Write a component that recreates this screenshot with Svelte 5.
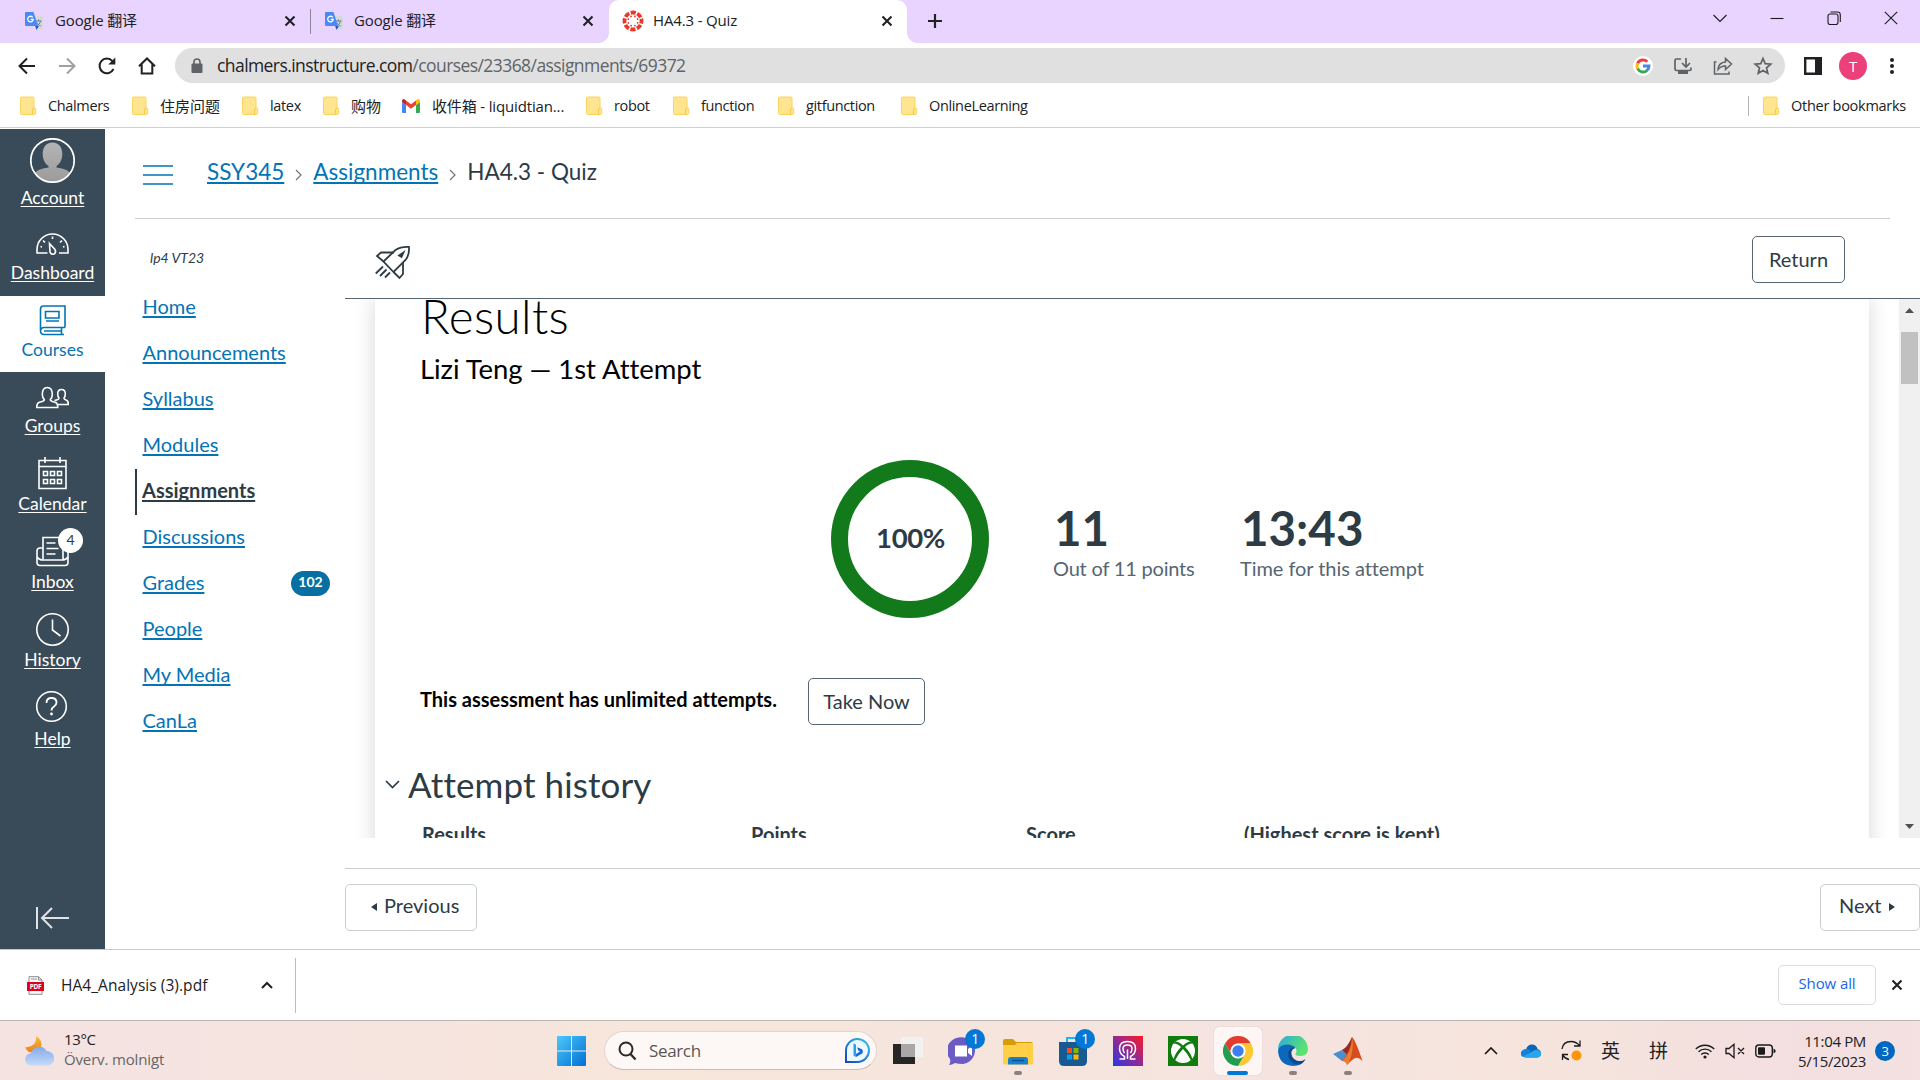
<script>
  const bookmarks = ['Chalmers', '住房问题', 'latex', '购物', '收件箱 - liquidtian...', 'robot', 'function', 'gitfunction', 'OnlineLearning'];
  const globalNav = ['Account', 'Dashboard', 'Courses', 'Groups', 'Calendar', 'Inbox', 'History', 'Help'];
  const courseNav = ['Home', 'Announcements', 'Syllabus', 'Modules', 'Assignments', 'Discussions', 'Grades', 'People', 'My Media', 'CanLa'];
  const apps = ['taskview', 'chat', 'explorer', 'store', 'purple', 'xbox', 'chrome', 'edge', 'matlab'];
  const running = ['explorer', 'edge', 'matlab'];
  const canvasRays = [0, 45, 90, 135, 180, 225, 270, 315];
</script>

{#snippet close()}
  <svg class="x" width="12" height="12" viewBox="0 0 12 12"><path d="M1.5 1.5 10.5 10.5M10.5 1.5 1.5 10.5" stroke="#202124" stroke-width="2.1" /></svg>
{/snippet}

{#snippet translateIcon()}
  <svg width="20" height="20" viewBox="0 0 20 20">
    <path d="M8 5h10a1 1 0 0 1 1 1v11a1 1 0 0 1-1 1h-6z" fill="#d5d9de" />
    <path d="M11.5 10h6M14.5 8.5V10M16.5 10c-.5 2.500-2 4-4 5M12.800 11.500c1 1.800 2.200 2.700 4 3.500" stroke="#6d7a8c" fill="none" />
    <path d="M11 14.500 12.500 19l2.500-4z" fill="#2a56c6" />
    <path d="M2 1h7.500L14 15H2a1 1 0 0 1-1-1V2a1 1 0 0 1 1-1z" fill="#4a89f3" />
    <path d="M8.700 6.300A2.800 2.800 0 1 0 9.300 8.300H6.600" stroke="#fff" stroke-width="1.300" fill="none" />
  </svg>
{/snippet}

{#snippet folder()}
  <svg width="17" height="20" viewBox="0 0 17 20">
    <path d="M1.500 1h11.500q1 0 1 1v10h.500q1.200 0 1.200 1.200V17q0 1.500-1.500 1.500H1.500q-1 0-1-1V2q0-1 1-1z" fill="#ffe590" stroke="#fbd45c" />
    <path d="M12.500 18.300v-4.500q0-1.500 1.500-1.500" fill="none" stroke="#f5c946" />
  </svg>
{/snippet}

<div class="screen">
  <div class="tabs">
    <div class="tab">{@render translateIcon()}<span>Google 翻译</span>{@render close()}</div>
    <div class="tab second">{@render translateIcon()}<span>Google 翻译</span>{@render close()}</div>
    <div class="tab active">
      <svg width="22" height="22" viewBox="0 0 22 22">
        <circle cx="11" cy="11" r="8.500" fill="none" stroke="#e8392b" stroke-width="3.800" stroke-dasharray="5.100 1.576" stroke-dashoffset="2.550" />
        {#each canvasRays as a}<circle cx="11" cy="6" r=".9" fill="#e8392b" transform="rotate({a + 22} 11 11)" />{/each}
      </svg>
      <span>HA4.3 - Quiz</span>{@render close()}
    </div>
    <svg class="plus" width="16" height="16" viewBox="0 0 16 16"><path d="M8 1v14M1 8h14" stroke="#202124" stroke-width="2.200" /></svg>
    <div class="winctl">
      <svg width="14" height="14" viewBox="0 0 14 14"><path d="M.5 4 7 10.500 13.500 4" /></svg>
      <svg width="14" height="14" viewBox="0 0 14 14"><path d="M.5 7.500h13" /></svg>
      <svg width="14" height="14" viewBox="0 0 14 14"><rect x="1" y="3" width="10" height="10.500" rx="2" /><path d="M3.500 1H10.500Q13.300 1 13.300 3.800V11" /></svg>
      <svg width="14" height="14" viewBox="0 0 14 14"><path d="M.8.800 13.200 13.200M13.200.800.800 13.200" /></svg>
    </div>
  </div>

  <div class="toolbar">
    <div class="navbtns">
      <svg width="20" height="20" viewBox="0 0 20 20"><path d="M18 10H3M10 2.500 2.500 10 10 17.500" /></svg>
      <svg class="dim" width="20" height="20" viewBox="0 0 20 20"><path d="M2 10h15M10 2.500 17.500 10 10 17.500" /></svg>
      <svg width="20" height="20" viewBox="0 0 20 20"><path d="M16.500 13A7.300 7.300 0 1 1 15.300 5" /><path d="M18.300 1.500v7h-7z" fill="#202124" stroke="none" /></svg>
      <svg width="20" height="20" viewBox="0 0 20 20"><path d="M2 10.200 10 2.500l8 7.700M4.700 8.500v9h10.600v-9" /></svg>
    </div>
    <div class="omnibox">
      <svg width="14" height="16" viewBox="0 0 14 16"><rect x="1.500" y="5.500" width="11" height="9.500" rx="1" fill="#5f6368" /><path d="M4 6V4a3 3 0 0 1 6 0v2" fill="none" stroke="#5f6368" stroke-width="1.600" /></svg>
      <span class="url">chalmers.instructure.com<i>/courses/23368/assignments/69372</i></span>
      <div class="omni-icons">
        <svg width="20" height="20" viewBox="0 0 20 20"><circle cx="10" cy="10" r="10" fill="#fff" /><g fill="none" stroke-width="2.900"><path d="M4.600 7.300A6 6 0 0 1 14.300 5.800" stroke="#ea4335" /><path d="M4.600 12.700A6 6 0 0 1 4.600 7.300" stroke="#fbbc05" /><path d="M14 14.500A6 6 0 0 1 4.600 12.700" stroke="#34a853" /><path d="M10 10h6A6 6 0 0 1 13.800 14.700" stroke="#4285f4" /></g></svg>
        <svg width="20" height="20" viewBox="0 0 20 20"><g fill="none" stroke="#5f6368" stroke-width="1.700"><path d="M8 3H3.500Q2 3 2 4.500V13q0 1.500 1.500 1.500h13q1.500 0 1.500-1.500v-1.500M13 2v8M9 7l4 4 4-4" /></g><path d="M5 15h10v3H5z" fill="#5f6368" /></svg>
        <svg width="20" height="20" viewBox="0 0 20 20"><g fill="none" stroke="#5f6368" stroke-width="1.500"><path d="M3.500 6H1.500v12H16v-2.500" /><path d="M5 13.500Q5.500 6.500 12.500 6V2.500L18.500 8l-6 5.500V10Q8 9.800 5 13.500z" /></g></svg>
        <svg width="20" height="20" viewBox="0 0 20 20"><path d="m10 2.500 2.200 5.200 5.600.4-4.300 3.700 1.300 5.500L10 14.400l-4.800 2.900 1.300-5.500L2.200 8.100l5.600-.4z" fill="none" stroke="#5f6368" stroke-width="1.700" /></svg>
      </div>
    </div>
    <svg class="panel" width="18" height="18" viewBox="0 0 18 18"><path d="M1.200 1.200h15.600v15.600H1.200z" fill="#fff" stroke="#202124" stroke-width="2.400" /><path d="M11 1h6v16h-6z" fill="#202124" /></svg>
    <div class="avatar">T</div>
    <svg class="dots" width="6" height="18" viewBox="0 0 6 18"><g fill="#202124"><circle cx="3" cy="3" r="2" /><circle cx="3" cy="9" r="2" /><circle cx="3" cy="15" r="2" /></g></svg>
  </div>

  <div class="bookmarks">
    {#each bookmarks as b, i}
      <div class="bm" class:mail={i === 4} class:cjk={i === 1 || i === 3}>
        {#if i === 4}
          <svg width="18" height="14" viewBox="0 0 18 14"><path d="M0 3v10q0 1 1 1h3V6z" fill="#4285f4" /><path d="M18 3v10q0 1-1 1h-3V6z" fill="#34a853" /><path d="M0 2q0-2 2-2l2 1.500V6L0 3z" fill="#c5221f" /><path d="M4 1.500 9 5.300l5-3.800V6L9 9.800 4 6z" fill="#ea4335" /><path d="M18 2q0-2-2-2l-2 1.500V6l4-3z" fill="#fbbc04" /></svg>
        {:else}{@render folder()}{/if}
        <span>{b}</span>
      </div>
    {/each}
    <div class="bm other">{@render folder()}<span>Other bookmarks</span></div>
  </div>

  <div class="page">
    <nav class="global">
      {#each globalNav as g}
        <div class="gitem" class:on={g === 'Courses'}>
          {#if g === 'Account'}
            <svg width="45" height="45" viewBox="0 0 45 45">
              <defs><clipPath id="face"><circle cx="22.500" cy="22.500" r="21.500" /></clipPath><linearGradient id="skin" x1="0" y1="0" x2="0" y2="1"><stop offset="0" stop-color="#b5b5b5" /><stop offset="1" stop-color="#9a9a9a" /></linearGradient></defs>
              <g clip-path="url(#face)" fill="url(#skin)"><path d="M22.500 4.500c6.500 0 9.800 5 9.800 11.500S29 26.500 26.500 28v1.500q12 1 15.500 8v8H3v-8q3.500-7 15.500-8V28C16 26.500 12.700 22.500 12.700 16s3.300-11.500 9.800-11.500z" /></g>
              <circle cx="22.500" cy="22.500" r="21.700" fill="none" stroke="#fff" stroke-width="1.700" />
            </svg>
          {:else}
            <svg width="33" height="34" viewBox="0 0 33 34" fill="none" stroke="currentColor" stroke-width="1.600">
              {#if g === 'Dashboard'}
                <path d="M11.500 28H1v-3.500a15.500 15.500 0 0 1 31 0V28H23M16.500 11.500V14M7 15.500l2 2M26 15.500l-2 2M4.500 21.500 6 22M28.500 21.500 27 22" /><path d="M13.500 18.500 19 24.500q1.500 3-1 4.500-3 1-4-2z" />
              {:else if g === 'Courses'}
                <path d="M29 25.500V4H7.500Q4.500 4 4.500 7V28.500Q4.500 32.500 8 32.500H28M4.500 28.500Q5 25.500 8 25.500H29M25.500 26v6.500M8 29h17M9.500 9.500h13.500v6.500H9.500zM10 19h13" />
              {:else if g === 'Groups'}
                <path d="M.8 29.500q-.3-5 3.500-5.500 4-.6 4-2.500-2-2-2-5 0-7 5-7t5 7q0 3-2 5 0 1.900 4 2.500 3.500.5 3.500 5.500z" /><path d="M18.500 22.500q4.500-.8 4.500-2.500-1.300-1.500-1.300-4 0-4.500 3.800-4.500t3.800 4.500q0 2.500-1.300 4 0 1.500 2 2 2.500.5 2.200 4.500H22" />
              {:else if g === 'Calendar'}
                <path d="M3 4.500h27v28H3zM3 10.500h27M9 1v6M24 1v6" /><path d="M7.500 15.500h4v4h-4zM14.500 15.500h4v4h-4zM21.500 15.500h4v4h-4zM7.500 23.500h4v4h-4zM14.500 23.500h4v4h-4zM21.500 23.500h4v4h-4z" />
              {:else if g === 'Inbox'}
                <path d="M7 25V3.500h20V25M10.500 9h9M10.500 14.500h12M10.500 20h9M7 14H4Q1 14 1 17v11.500Q1 31.500 4 31.500H29Q32 31.500 32 28.500V17q0-3-3-3M1 23q2 3 6 3H26q4 0 6-3" />
              {:else if g === 'History'}
                <circle cx="16.500" cy="17.500" r="15.700" /><path d="M16.500 7.500V18l8 6" />
              {:else}
                <circle cx="15.500" cy="15.500" r="14.800" /><path d="M10.500 12q0-5 5-5t5 4.500q0 2.500-2.500 4-2.500 1.500-2.500 4" stroke-width="1.800" /><circle cx="15.500" cy="23" r="1.400" fill="currentColor" stroke="none" />
              {/if}
            </svg>
          {/if}
          <span>{g}</span>
          {#if g === 'Inbox'}<b class="count">4</b>{/if}
        </div>
      {/each}
      <div class="collapse"><svg width="35" height="24" viewBox="0 0 35 24" fill="none" stroke="#dfe3e6" stroke-width="2"><path d="M2 1v22M34 12H7M17 2 7 12l10 10" /></svg></div>
    </nav>

    <main>
      <header class="crumbs">
        <svg width="30" height="22" viewBox="0 0 30 22"><path d="M0 2h30M0 11h30M0 20h30" stroke="#0374b5" stroke-width="1.600" /></svg>
        <a class="first">SSY345</a>
        <svg class="sep" width="7" height="12" viewBox="0 0 7 12"><path d="m1 1 5 5-5 5" /></svg>
        <a>Assignments</a>
        <svg class="sep" width="7" height="12" viewBox="0 0 7 12"><path d="m1 1 5 5-5 5" /></svg>
        <span>HA4.3 - Quiz</span>
      </header>

      <div class="body">
        <nav class="course">
          <p>lp4 VT23</p>
          {#each courseNav as c}
            <div class="citem" class:current={c === 'Assignments'}><a>{c}</a>{#if c === 'Grades'}<b>102</b>{/if}</div>
          {/each}
        </nav>

        <section>
          <div class="quizbar">
            <svg width="35" height="34" viewBox="0 0 35 34" fill="none" stroke="#2d3b45" stroke-width="1.800">
              <path d="M8.500 15.500 20.500 4Q26 .5 34 1q.5 8-3.500 13L18.500 26z" /><path d="M19 6.500H6L2 10l6.500 5.500M28 16V28l-3.500 4L18.500 26M8 20.500.800 27.500M11.500 23.500 5 30M15 26.500 10 31.500" /><path d="M24 9.500 28.500 6.500 26.500 11z" fill="#2d3b45" />
            </svg>
            <button>Return</button>
          </div>

          <div class="viewport">
            <div class="card">
              <h1>Results</h1>
              <h2>Lizi Teng — 1st Attempt</h2>
              <div class="stats">
                <div class="ring">100%</div>
                <div class="stat points"><strong>11</strong><span>Out of 11 points</span></div>
                <div class="stat"><strong>13:43</strong><span>Time for this attempt</span></div>
              </div>
              <div class="retake"><b>This assessment has unlimited attempts.</b><button>Take Now</button></div>
              <h3><svg width="15" height="9" viewBox="0 0 15 9"><path d="m1 1 6.500 6.500L14 1" fill="none" stroke="#2d3b45" stroke-width="1.700" /></svg>Attempt history</h3>
              <div class="thead"><span>Results</span><span>Points</span><span>Score</span><span>(Highest score is kept)</span></div>
            </div>
            <div class="scroll">
              <svg width="9" height="5" viewBox="0 0 9 5"><path d="M0 5 4.500 0 9 5z" fill="#505050" /></svg>
              <div class="thumb"></div>
              <svg width="9" height="5" viewBox="0 0 9 5"><path d="M0 0 4.500 5 9 0z" fill="#505050" /></svg>
            </div>
          </div>

          <div class="pager">
            <button class="prev"><svg width="6" height="8" viewBox="0 0 6 8"><path d="M6 0v8L0 4z" fill="#2d3b45" /></svg>Previous</button>
            <button class="next">Next<svg width="6" height="8" viewBox="0 0 6 8"><path d="M0 0v8l6-4z" fill="#2d3b45" /></svg></button>
          </div>
        </section>
      </div>
    </main>
  </div>

  <div class="downloads">
    <svg width="17" height="19" viewBox="0 0 17 19"><path d="M2 .7h9.500L15 4v14.300H2z" fill="#fff" stroke="#8b8b8b" /><path d="M4 3h6M11.500.7V4H15" stroke="#8b8b8b" fill="none" /><path d="M0 6h17v9H0z" fill="#e2001a" /><text x="8.500" y="13" text-anchor="middle" font-size="6.500" font-weight="700" fill="#fff">PDF</text></svg>
    <span class="file">HA4_Analysis (3).pdf</span>
    <svg class="caret" width="12" height="8" viewBox="0 0 12 8"><path d="M1 7 6 2l5 5" fill="none" stroke="#202124" stroke-width="2" /></svg>
    <i></i>
    <div class="showall">Show all</div>
    {@render close()}
  </div>

  <div class="taskbar">
    <div class="weather">
      <svg width="30" height="30" viewBox="0 0 30 30">
        <defs><linearGradient id="cloud" x1="0" y1="0" x2="0" y2="1"><stop offset="0" stop-color="#86a9ea" /><stop offset="1" stop-color="#c3dcf8" /></linearGradient><linearGradient id="moon" x1="0" y1="0" x2="0" y2="1"><stop offset="0" stop-color="#f6bf3c" /><stop offset="1" stop-color="#ea7f1d" /></linearGradient></defs>
        <path d="M11 0q7 4 5 11-4 7-12 5Q1 14 0 11q5 1 9-3 3-4 2-8z" fill="url(#moon)" />
        <path d="M6.500 29.500a6 6 0 0 1-.5-12.300A8.500 8.500 0 0 1 21.500 15a7.300 7.300 0 0 1 1.500 14.500z" fill="url(#cloud)" />
      </svg>
      <div><span>13°C</span><em>Överv. molnigt</em></div>
    </div>
    <svg class="start" width="29" height="30" viewBox="0 0 29 30"><defs><linearGradient id="win" x1="0" y1="0" x2="1" y2="1"><stop offset="0" stop-color="#4cc8fb" /><stop offset="1" stop-color="#006fd3" /></linearGradient></defs><path d="M1 0h13v14.500H0V1q0-1 1-1zM15 0h13q1 0 1 1v13.500H15zM0 15.500h14V30H1q-1 0-1-1zM15 15.500h14V29q0 1-1 1H15z" fill="url(#win)" /></svg>
    <div class="search">
      <svg width="19" height="20" viewBox="0 0 19 20"><circle cx="8" cy="8" r="6.500" fill="none" stroke="#2a2a2a" stroke-width="2" /><path d="m12.500 13 5 5.500" stroke="#2a2a2a" stroke-width="2.300" /></svg>
      <span>Search</span>
      <svg width="26" height="26" viewBox="0 0 26 26"><defs><linearGradient id="bing" x1="0" y1="1" x2="1" y2="0"><stop offset="0" stop-color="#1747b8" /><stop offset="1" stop-color="#34c4f0" /></linearGradient></defs><path d="M2 24V13A11.500 11.500 0 1 1 13.500 24z" fill="#eef8ff" stroke="url(#bing)" stroke-width="2" /><path d="M9.500 5.500 12 6.500V19l-2.500-1.500z" fill="#2a9fe8" /><path d="M12 19l6.500-3.700q1-3-1-4.200L13 9.200l1.300 3.300 1.700.9L12 16z" fill="#1568d6" /></svg>
    </div>
    <div class="apps">
      {#each apps as a}
        <div class="app" class:focus={a === 'chrome'}>
          <svg width="30" height="30" viewBox="0 0 30 30">
            {#if a === 'taskview'}
              <path d="M0 8h22v20H0z" fill="#262626" /><path d="M8 1h22v20H8z" fill="#f1f1f0" /><path d="M8 8h14v13H8z" fill="#a9a8a7" />
            {:else if a === 'chat'}
              <path d="M1 29q2-3 1-6A14 13.500 0 1 1 15 28q-5 0-8-1-3 2-6 2z" fill="#6b5bc5" /><path d="M7 9.500h12v11H7zM20 13l4-3v10l-4-3z" fill="#fff" />
            {:else if a === 'explorer'}
              <path d="M0 5q0-2 2-2h8l3 3h15q2 0 2 2v5H0z" fill="#d89c06" /><path d="M0 9h12l2-2h16v20q0 1.500-1.500 1.500h-27Q0 28.500 0 27z" fill="#ffcf48" /><path d="M5 28.500V24q0-3 3-3h14q3 0 3 3v4.500z" fill="#1680ce" /><path d="M9 24.500h12" stroke="#0c4f92" stroke-width="1.500" />
            {:else if a === 'store'}
              <path d="M9 8V2h11v6" fill="none" stroke="#1eb4ed" stroke-width="2" /><path d="M1 6h28v19q0 5-5 5H6q-5 0-5-5z" fill="#185893" /><path d="M9 12h5v5H9z" fill="#f25022" /><path d="M15.500 12h5v5h-5z" fill="#7fba00" /><path d="M9 18.500h5v5H9z" fill="#00a4ef" /><path d="M15.500 18.500h5v5h-5z" fill="#ffb900" />
            {:else if a === 'purple'}
              <defs><linearGradient id="pur" x1="0" y1="1" x2="1" y2="0"><stop offset="0" stop-color="#2636e8" /><stop offset=".5" stop-color="#912a94" /><stop offset="1" stop-color="#ff1821" /></linearGradient></defs>
              <path d="M0 0h30v30H0z" fill="url(#pur)" /><path d="M6.500 23h5v-2.500Q6.500 18 6.500 12.500 6.500 5.500 14.500 5.500t8 7q0 5.500-5 8V23h5M10.500 23h1M14.500 23v-9.500M11.500 17q-1.500-2-1.500-4.500Q10 9 14.500 9T19 12.500q0 2.500-1.500 4.500" fill="none" stroke="#fff" stroke-width="1.500" />
            {:else if a === 'xbox'}
              <path d="M0 0h30v30H0z" fill="#107c10" /><circle cx="15" cy="15" r="12" fill="#fff" /><path d="M7 5.500q4 0 8 4 4-4 8-4l1.500 2Q20 7.500 17 11q6 6 7.500 12.500l-1.500 1Q20 18 15 13 10 18 7 24.500l-1.500-1Q7 17 13 11 10 7.500 5.500 7.500z" fill="#107c10" />
            {:else if a === 'chrome'}
              <circle cx="15" cy="15" r="15" fill="#fff" /><path d="M2 7.500A15 15 0 0 1 28 7.500H15A7.500 7.500 0 0 0 8.500 18.700z" fill="#e33b2e" /><path d="M28 7.500A15 15 0 0 1 15 30l6.500-11.300A7.500 7.500 0 0 0 15 7.500z" fill="#fcc934" /><path d="M15 30A15 15 0 0 1 2 7.500l6.500 11.200a7.500 7.500 0 0 0 13 0z" fill="#229c4f" /><circle cx="15" cy="15" r="7.300" fill="#fff" /><circle cx="15" cy="15" r="5.700" fill="#3d7ef0" />
            {:else if a === 'edge'}
              <defs><linearGradient id="edg" x1="0" y1="0" x2="1" y2=".4"><stop offset="0" stop-color="#2ba8e0" /><stop offset="1" stop-color="#5be36e" /></linearGradient></defs>
              <path d="M0 14A15 15 0 0 1 30 13q0 7-7.500 7-5.500 0-5-2 2-3 0-6-4-4-10-2-5 2-7.500 4z" fill="url(#edg)" /><path d="M0 15Q1 8.500 9 8.500q6 0 8.500 3.500-5 0-5 6 0 6 7 8 4 .5 8-3Q24 30 15 30 1 29 0 15z" fill="#0c68bd" /><path d="M12 13q-4 5 0 11 4 5 10 4.500 3-1.500 5.500-5-4 2.500-9 1-6-3-5-9 1-3 3.500-3.500-3-1-5 1z" fill="#104a8c" />
            {:else}
              <path d="M0 18 9 14l5 5-5 6z" fill="#4a8fd0" /><path d="M9 14q5-2 10-13 1 14-10 24l5-6z" fill="#922c25" /><path d="M19 1q3 2 10.500 24-4-4-7-3T14 29q-1-4-5-4 9-10 10-24z" fill="#da4b1e" /><path d="M19.500 2q1 12-2 20-1 4-3.500 7-2-4-4-4 8-9 9.500-23z" fill="#f3a03e" opacity=".6" />
            {/if}
          </svg>
          {#if a === 'chat' || a === 'store'}<b>1</b>{/if}
          {#if running.includes(a)}<i></i>{/if}
        </div>
      {/each}
    </div>
    <div class="tray">
      <svg width="14" height="8" viewBox="0 0 14 8"><path d="m1 7 6-6 6 6" fill="none" stroke="#1b1b1b" stroke-width="1.700" /></svg>
      <svg width="20" height="14" viewBox="0 0 20 14"><path d="M5 6Q6 .5 11 .5q4.500 0 5.500 4.500Q20 6 20 9.500 20 13 16 13.500H4.500Q0 13 0 9.500 0 6 5 6z" fill="#0a64b8" /><path d="M0 9.500Q0 6 4 5q4-.5 6 2L3 13Q0 12 0 9.500z" fill="#1384dd" /><path d="M2 12.500 12 7q3-2 5-1 3 1 3 3.500 0 4-4 4H4.500z" fill="#27a6ee" /></svg>
      <svg width="21" height="21" viewBox="0 0 21 21" fill="none" stroke="#1b1b1b" stroke-width="1.300"><path d="M1 9Q2 1.500 10 1.500q5 0 8.500 4M19 .5v5.500h-6M8 19.500Q4.500 19 1.500 15M1.500 20v-5.500H7" /><circle cx="15.500" cy="15.500" r="5" fill="#ff9500" stroke="none" /></svg>
      <span class="ime">英</span>
      <span class="ime">拼</span>
      <svg width="20" height="16" viewBox="0 0 20 16" fill="none" stroke="#1b1b1b" stroke-width="1.400"><path d="M.8 6a13 13 0 0 1 18.400 0M3.500 8.800a9.200 9.200 0 0 1 13 0M6.200 11.500a5.400 5.400 0 0 1 7.600 0" /><circle cx="10" cy="14" r="1.600" fill="#1b1b1b" stroke="none" /></svg>
      <svg width="20" height="16" viewBox="0 0 20 16" fill="none" stroke="#1b1b1b" stroke-width="1.300"><path d="M1 5.500h3L9 1.300v13.400L4 10.500H1zM13 5l6 6M19 5l-6 6" /></svg>
      <svg width="21" height="14" viewBox="0 0 21 14"><rect x=".8" y="1" width="16.500" height="12" rx="3" fill="none" stroke="#1b1b1b" stroke-width="1.400" /><rect x="3" y="3.200" width="7" height="7.600" rx="1" fill="#1b1b1b" /><path d="M18.500 4.500 20.500 6v2l-2 1.500z" fill="#1b1b1b" /></svg>
      <div class="clock">11:04 PM<br />5/15/2023</div>
      <b class="notif">3</b>
    </div>
  </div>
</div>

<style>
  :global(body) { margin: 0; overflow: hidden; background: #fff; }
  .screen { width: 1920px; height: 1080px; display: flex; flex-direction: column; overflow: hidden; background: #fff; font-family: "Open Sans", "Noto Sans CJK SC", sans-serif; font-size: 15px; letter-spacing: -0.35px; color: #202124; }
  svg { display: block; flex: none; }
  i, em { font-style: normal; }

  .tabs { height: 43px; display: flex; background: #e8d4ff; flex: none; }
  .tab { box-sizing: border-box; width: 310px; height: 43px; padding: 0 14px 2px 24px; display: flex; align-items: center; gap: 11px; font-size: 15px; letter-spacing: -0.15px; }
  .tab span { padding-bottom: 2px; }
  .tab.second { position: relative; width: 299px; padding-right: 15px; padding-left: 14px; gap: 10px; border-radius: 0 0 10px 0; }
  .tab.second::before { content: ''; position: absolute; left: 0; top: 9px; width: 1px; height: 25px; background: #8f8599; }
  .tab .x { margin-left: auto; }
  .tab.active { position: relative; width: 298px; padding: 0 14px 2px 13px; gap: 9px; background: #fff; border-radius: 10px 10px 0 0; }
  .tab.active::before, .tab.active::after { content: ''; position: absolute; bottom: 0; width: 10px; height: 10px; }
  .tab.active::before { left: -10px; background: radial-gradient(circle at 0 0, transparent 9.5px, #fff 10px); }
  .tab.active::after { right: -10px; background: radial-gradient(circle at 100% 0, transparent 9.5px, #fff 10px); }
  .plus { margin: 13px 0 0 20px; }
  .winctl { margin-left: auto; padding: 11px 22px 0 0; display: flex; gap: 43px; }
  .winctl svg { fill: none; stroke: #1b1b1b; stroke-width: 1.1; }

  .toolbar { height: 45px; flex: none; display: flex; align-items: center; }
  .navbtns { width: 157px; margin-right: 18px; box-sizing: border-box; padding-left: 17px; display: flex; justify-content: space-between; }
  .navbtns svg { fill: none; stroke: #202124; stroke-width: 2; }
  .navbtns .dim { stroke: #a0a0a3; }
  .omnibox { box-sizing: border-box; width: 1610px; height: 35px; border-radius: 18px; background: #e0e0e0; display: flex; align-items: center; padding: 0 12px 0 15px; }
  .url { margin-left: 13px; padding-bottom: 1px; font-size: 17.5px; letter-spacing: -0.57px; }
  .url i { color: #5f6368; }
  .omni-icons { margin-left: auto; display: flex; gap: 20px; }
  .panel { margin-left: 19px; }
  .avatar { width: 28px; height: 28px; margin-left: 17px; border-radius: 50%; background: #ec407a; color: #fff; text-align: center; line-height: 28px; font-size: 15px; }
  .dots { margin-left: 22px; }

  .bookmarks { height: 40px; flex: none; box-sizing: border-box; border-bottom: 1px solid #cfcfd1; padding: 0 0 3px 20px; display: grid; grid-template-columns: 112px 110px 81px 79px 184px 87px 105px 123px 1fr 172px; align-items: center; }
  .bm { display: flex; align-items: center; gap: 11px; white-space: nowrap; font-size: 14.5px; }
  .bm span { padding-bottom: 2px; }
  .bm.cjk { font-size: 15px; letter-spacing: 0; }
  .bm.mail { font-size: 15px; letter-spacing: -0.15px; gap: 12px; }
  .other { border-left: 1px solid #b5b5b7; padding-left: 14px; height: 20px; letter-spacing: -0.27px; }

  .page { height: 821px; flex: none; display: flex; margin-top: 1px; box-sizing: border-box; border-bottom: 1px solid #c9c9cb; font-family: Lato, sans-serif; font-variant-ligatures: none; letter-spacing: 0; color: #2d3b45; }
  .global { width: 105px; background: #394b58; display: grid; grid-template-rows: 91px 76px 76px 77px 78px 78px 78px 79px 1fr; color: #fff; }
  .gitem { position: relative; display: flex; flex-direction: column; align-items: center; justify-content: flex-end; padding-bottom: 12px; gap: 3px; font-size: 17.5px; line-height: 22px; }
  .gitem span { text-decoration: underline; text-underline-offset: 2px; text-decoration-thickness: 1px; text-decoration-skip-ink: none; }
  .gitem.on { background: #fff; color: #0374b5; padding-bottom: 11px; }
  .gitem.on span { text-decoration: none; }
  .gitem:first-child { padding-bottom: 11px; gap: 4px; }
  .count { position: absolute; left: 58px; top: 1px; width: 25px; height: 25px; border-radius: 50%; background: #fff; color: #2d3b45; font: 400 14px/23px Lato, sans-serif; text-align: center; }
  .collapse { display: flex; align-items: flex-end; padding: 0 0 19px 35px; }

  main { flex: 1; min-width: 0; display: flex; flex-direction: column; }
  .crumbs { box-sizing: border-box; height: 90px; flex: none; margin: 0 30px; padding: 0 0 4px 8px; display: flex; align-items: center; font-size: 22.5px; line-height: 26px; border-bottom: 1px solid #c7cdd1; }
  .crumbs svg { margin-top: 6px; }
  .crumbs .first { margin-left: 34px; }
  a { color: #0374b5; text-decoration: underline; text-decoration-thickness: 2px; text-underline-offset: 2px; text-decoration-skip-ink: none; }
  .crumbs .sep { margin: 6px 11px 0 11px; fill: none; stroke: #6b7780; stroke-width: 1.2; }

  .body { flex: 1; display: flex; min-height: 0; }
  .course { width: 240px; box-sizing: border-box; padding: 25px 15px 0 30px; }
  .course p { margin: 0 0 14px; padding-left: 15px; font-style: italic; font-size: 14px; line-height: 27px; }
  .citem { box-sizing: border-box; height: 46px; padding: 0 0 4px 7.5px; display: flex; align-items: center; justify-content: space-between; font-size: 20px; line-height: 24px; }
  .citem a { margin-top: -1px; }
  .citem.current { border-left: 2px solid #2d3b45; padding-left: 5px; }
  .citem.current a { color: #2d3b45; font-weight: 700; }
  .citem b { width: 39px; height: 25px; margin-top: 2px; border-radius: 13px; background: #0770a3; color: #fff; font-size: 14px; line-height: 22px; text-align: center; }

  section { flex: 1; min-width: 0; display: flex; flex-direction: column; }
  button { box-sizing: border-box; height: 47px; background: #fff; border: 1px solid #556572; border-radius: 5px; font: 400 20px/24px Lato, sans-serif; font-variant-ligatures: none; color: #2d3b45; padding: 0 0 2px; }
  .quizbar { height: 80px; box-sizing: border-box; border-bottom: 1px solid #556572; display: flex; align-items: center; justify-content: space-between; padding: 2px 75px 0 30px; }
  .quizbar svg { margin-top: 7px; }
  .quizbar button { width: 93px; }
  .viewport { height: 539px; flex: none; overflow: hidden; display: flex; justify-content: space-between; padding-left: 30px; background: #fff; }
  .card { box-sizing: border-box; width: 1494px; height: 600px; box-shadow: 0 0 20px rgba(0, 0, 0, .16); padding-left: 45px; color: #000; background: #fff; }
  h1, h2, h3 { margin: 0; font-weight: 400; }
  h1 { margin-top: -7px; font-size: 47.5px; line-height: 48px; font-weight: 300; letter-spacing: .4px; padding-left: 1px; }
  h2 { margin-top: 12px; font-size: 27.5px; line-height: 34px; letter-spacing: -0.05px; }
  .stats { margin: 74px 0 60px 411px; height: 158px; display: flex; color: #2d3b45; }
  .ring { box-sizing: border-box; width: 158px; height: 158px; border: 17.5px solid #127a1b; border-radius: 50%; font-size: 27.5px; font-weight: 700; line-height: 122px; text-align: center; letter-spacing: -0.4px; text-indent: 1px; }
  .stat { margin: 44px 0 0 64px; display: flex; flex-direction: column; gap: 4px; }
  .points { width: 123px; white-space: nowrap; }
  .points span { letter-spacing: -0.2px; }
  .stat strong { font-size: 47.5px; line-height: 48px; padding-left: 1px; }
  .stat span { font-size: 20px; line-height: 24px; color: #556572; }
  .stat:last-child span { letter-spacing: -0.05px; }
  .retake { display: flex; align-items: center; gap: 30px; font-size: 20px; line-height: 24px; }
  .retake b { width: 358px; white-space: nowrap; padding-bottom: 5px; }
  .retake button { width: 117px; }
  h3 { margin: 38px 0 0 -35px; display: flex; align-items: center; gap: 8px; color: #2d3b45; font-size: 35px; line-height: 42px; letter-spacing: .1px; }
  .thead { margin: 17px 0 0 2px; display: grid; grid-template-columns: 329px 275px 218px 1fr; font-size: 20px; line-height: 24px; font-weight: 700; color: #2d3b45; }
  .scroll { width: 21px; background: #f0f0f0; display: flex; flex-direction: column; align-items: center; padding: 9px 0 9px; box-sizing: border-box; }
  .scroll svg:last-child { margin-top: auto; }
  .thumb { width: 17px; height: 52px; margin-top: 19px; background: #c1c1c1; }
  .pager { margin-top: 30px; border-top: 1px solid #c7cdd1; padding-top: 15px; display: flex; justify-content: space-between; }
  .pager button { display: flex; align-items: center; padding-bottom: 6px; border-color: #c7cdd1; gap: 7px; }
  .pager svg { margin-top: 4px; }
  .prev { width: 132px; padding-left: 25px; }
  .next { width: 100px; padding-left: 18px; }

  .downloads { height: 71px; flex: none; box-sizing: border-box; border-bottom: 1px solid #beb5b3; display: flex; align-items: center; padding: 0 17px 0 27px; }
  .file { width: 180px; margin-left: 17px; padding-bottom: 1px; white-space: nowrap; font-size: 15.5px; letter-spacing: .05px; }
  .caret { margin-left: 20px; margin-right: 22px; }
  .downloads i { width: 1px; height: 55px; background: #bdbdbf; }
  .showall { box-sizing: border-box; width: 98px; height: 40px; margin-left: auto; margin-right: 15px; border: 1px solid #dadce0; border-radius: 5px; color: #1a66e8; text-align: center; line-height: 35px; font-size: 15px; letter-spacing: -0.1px; }
  .downloads .x { margin-top: -1px; }

  .taskbar { flex: 1; display: flex; align-items: center; background: linear-gradient(90deg, #f5e3e2 0, #f6e4e0 350px, #f7e6da 650px, #f6e5dd 1000px, #f5e3e0 1300px, #f6e5dc 1500px, #f3dfe0 1800px, #f4e1e0 1920px); }
  .weather { display: flex; align-items: center; width: 532px; padding-left: 25px; gap: 9px; line-height: 19.5px; }
  .weather div { display: flex; flex-direction: column; padding-bottom: 2px; }
  .weather em { color: #666; letter-spacing: -0.15px; }
  .search { box-sizing: border-box; width: 273px; height: 39px; margin: 0 7px 0 18px; border: 1px solid #e4d5cf; border-bottom-color: #c9bdb8; border-radius: 20px; background: #fdf8f6; display: flex; align-items: center; padding: 0 6px 0 13px; }
  .search span { margin: 0 auto 0 12px; font-size: 17px; color: #5b5654; }
  .apps { display: flex; gap: 7px; }
  .app { position: relative; width: 48px; height: 48px; display: grid; place-items: center; border-radius: 5px; }
  .app b { position: absolute; right: 2px; top: 2px; width: 20px; height: 20px; border-radius: 50%; background: #0078d4; color: #fff; font-weight: 400; font-size: 14px; line-height: 20px; text-align: center; }
  .app i { position: absolute; left: 20px; bottom: 0; width: 8px; height: 4px; border-radius: 2px; background: #8b8280; }
  .app.focus { background: #fdf6f4; box-shadow: 0 0 1px #b9aca8; }
  .app.focus::after { content: ''; position: absolute; left: 13px; bottom: 0; width: 21px; height: 4px; border-radius: 2px; background: #0078d4; }
  .tray { margin-left: auto; padding-right: 25px; display: flex; align-items: center; }
  .tray svg + svg { margin-left: 10px; }
  .tray svg:nth-child(2) { margin-left: 23px; }
  .tray svg:nth-child(3) { margin-left: 20px; }
  .ime { font-size: 19px; line-height: 24px; margin-left: 19px; letter-spacing: 0; }
  .ime + .ime { margin: 0 27px 0 29px; }
  .clock { width: 90px; text-align: right; line-height: 20px; }
  .notif { width: 20px; height: 20px; margin-left: 9px; border-radius: 50%; background: #0067c0; color: #fff; font-weight: 400; font-size: 13px; line-height: 20px; text-align: center; }
</style>
